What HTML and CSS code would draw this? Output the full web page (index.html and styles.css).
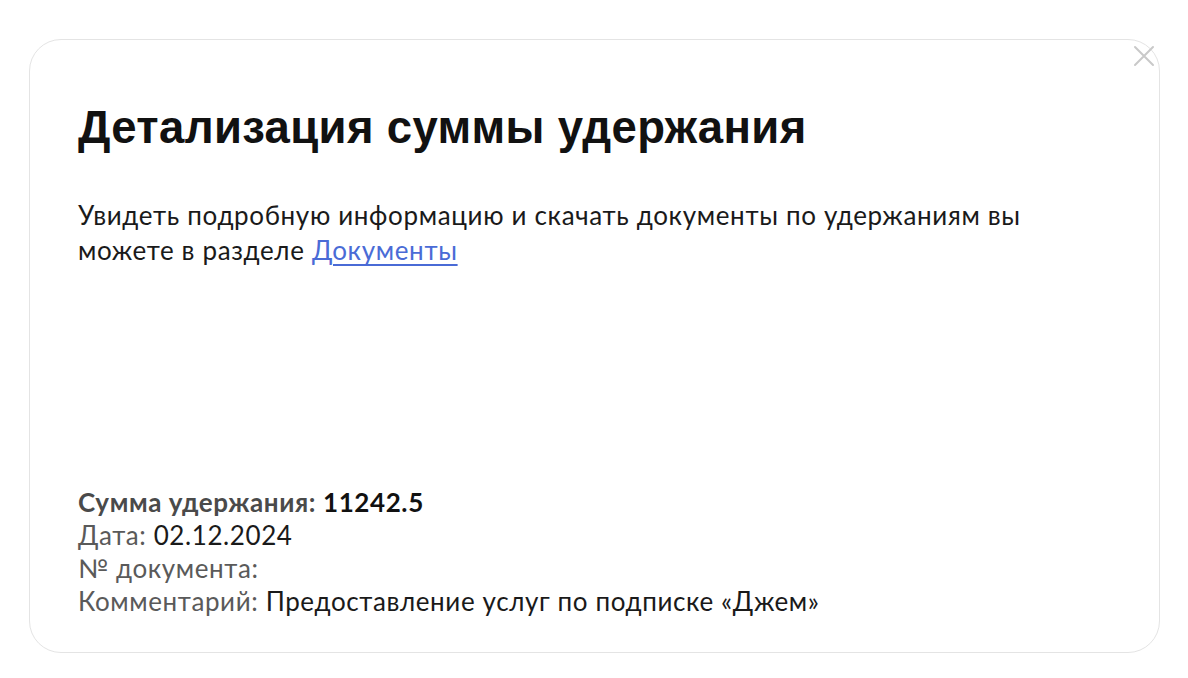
FILE: index.html
```html
<!DOCTYPE html>
<html lang="ru">
<head>
<meta charset="utf-8">
<link rel="stylesheet" href="styles.css">
</head>
<body>
<div class="page">
  <div class="card">
    <button class="close" aria-label="Закрыть">
      <svg width="22" height="22" viewBox="0 0 22 22"><path d="M2 2L20 20M20 2L2 20" stroke="#c9c9c9" stroke-width="2" stroke-linecap="round"/></svg>
    </button>
    <h1 class="title">Детализация суммы удержания</h1>
    <p class="intro">Увидеть подробную информацию и скачать документы по удержаниям вы можете в разделе <a href="#" class="link">Документы</a></p>
    <div class="details">
      <div class="row strong"><span class="label">Сумма удержания:</span> <span class="value">11242.5</span></div>
      <div class="row"><span class="label">Дата:</span> <span class="value">02.12.2024</span></div>
      <div class="row"><span class="label">№ документа:</span></div>
      <div class="row"><span class="label">Комментарий:</span> <span class="value">Предоставление услуг по подписке «Джем»</span></div>
    </div>
  </div>
</div>
</body>
</html>
```
FILE: styles.css
```css
* { box-sizing: border-box; }
html, body { margin: 0; padding: 0; background: #fff; }
body { font-family: Lato, "Noto Sans", sans-serif; }
.page { padding: 39px 29px 0 29px; }
.card {
  position: relative;
  width: 1131px;
  height: 614px;
  border: 1.5px solid #e4e4e4;
  border-radius: 32px;
  padding: 62px 48px 34px 48px;
  display: flex;
  flex-direction: column;
}
.close {
  position: absolute;
  top: 5px;
  right: 4px;
  background: none;
  border: 0;
  padding: 0;
  width: 22px;
  height: 22px;
}
.title {
  margin: 0;
  font-family: "Liberation Sans", Arial, sans-serif;
  font-weight: 700;
  font-size: 45.5px;
  line-height: 52px;
  color: #111;
  letter-spacing: 0.35px;
}
.intro {
  margin: 44px 0 0 0;
  font-size: 26px;
  line-height: 35px;
  letter-spacing: 0.65px;
  color: #1a1a1a;
  max-width: 975px;
}
.link { color: #4a6bd6; text-decoration: underline; text-underline-offset: 4px; text-decoration-thickness: 2px; }
.details { margin-top: auto; }
.row { font-size: 26px; line-height: 33px; letter-spacing: 0.6px; color: #1a1a1a; }
.row .label { color: #5a5a5a; }
.row.strong { font-weight: 700; }
.row.strong .label { color: #4a4a4a; }
.row.strong .value { color: #111; }
```
